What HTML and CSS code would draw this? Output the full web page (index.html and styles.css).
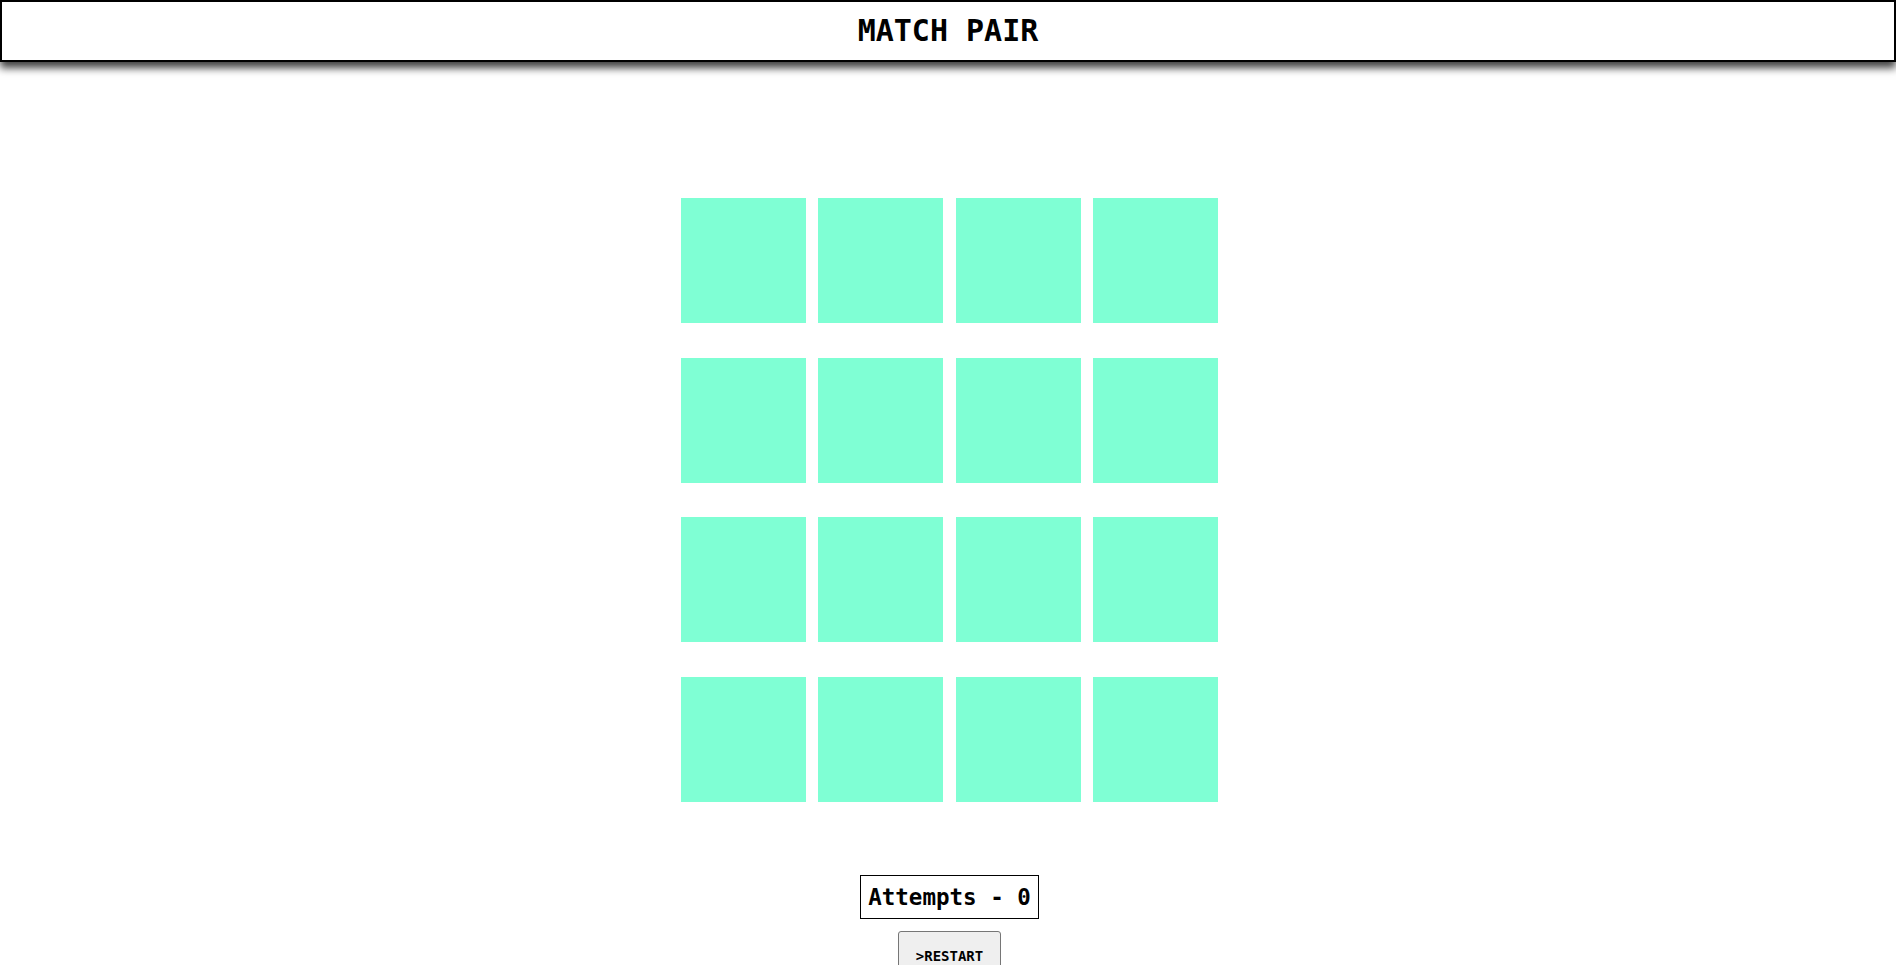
FILE: index.html
```html
<!DOCTYPE html>
<html lang="en">
<head>
<meta charset="utf-8">
<title>Match Pair</title>
<link rel="stylesheet" href="styles.css">
</head>
<body>
<header class="topbar">
  <h1 class="title">MATCH PAIR</h1>
</header>
<main class="game">
  <div class="board">
    <div class="card"></div><div class="card"></div><div class="card"></div><div class="card"></div>
    <div class="card"></div><div class="card"></div><div class="card"></div><div class="card"></div>
    <div class="card"></div><div class="card"></div><div class="card"></div><div class="card"></div>
    <div class="card"></div><div class="card"></div><div class="card"></div><div class="card"></div>
  </div>
  <div class="attempts">Attempts - 0</div>
  <button class="restart" type="button">&gt;RESTART</button>
</main>
</body>
</html>
```

FILE: styles.css
```css
html, body {
  margin: 0;
  padding: 0;
  background: #ffffff;
  overflow-x: hidden;
}

body {
  font-family: "DejaVu Sans Mono", "Liberation Mono", monospace;
  color: #000;
}

.topbar {
  height: 58px;
  border: 2px solid #000;
  display: flex;
  align-items: center;
  justify-content: center;
  box-shadow: 0 6px 8px rgba(0, 0, 0, 0.75);
  background: #fff;
}

.title {
  margin: 0;
  font-size: 30px;
  font-weight: bold;
  line-height: 1;
}

.game {
  display: flex;
  flex-direction: column;
  align-items: center;
  padding-top: 136px;
  padding-left: 3px;
}

.board {
  display: grid;
  grid-template-columns: repeat(4, 125px);
  column-gap: 12.33px;
  row-gap: 34.67px;
}

.card {
  width: 125px;
  height: 125px;
  background: #7fffd4;
}

.attempts {
  margin-top: 73px;
  border: 1px solid #000;
  padding: 0 7px;
  height: 42px;
  display: flex;
  align-items: center;
  font-size: 22.5px;
  font-weight: bold;
}

.restart {
  margin-top: 12px;
  font-family: "DejaVu Sans Mono", "Liberation Mono", monospace;
  font-size: 14px;
  font-weight: bold;
  padding: 16px 17px;
  background: #efefef;
  border: 1px solid #767676;
  border-radius: 3px;
  color: #000;
}
```
